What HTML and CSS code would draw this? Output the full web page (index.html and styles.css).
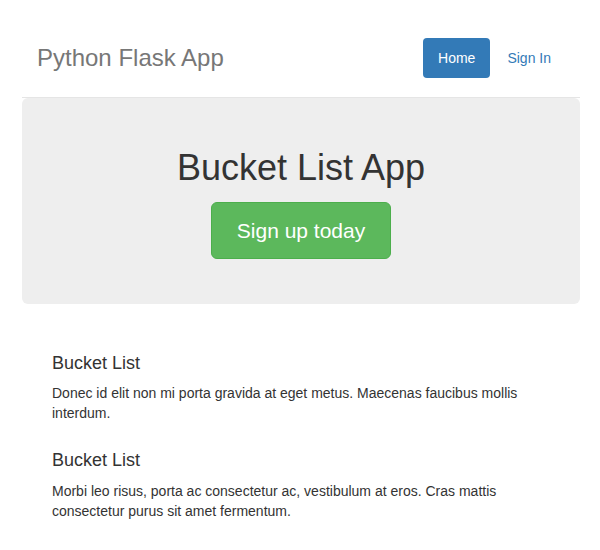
FILE: index.html
```html
<!DOCTYPE html>
<html lang="en">
<head>
<meta charset="utf-8">
<title>Python Flask Bucket List App</title>
<link rel="stylesheet" href="styles.css">
</head>
<body>
<div class="container">
  <div class="header">
    <h3 class="brand">Python Flask App</h3>
    <nav class="nav">
      <a class="pill active" href="#">Home</a>
      <a class="pill" href="#">Sign In</a>
    </nav>
  </div>

  <div class="jumbotron">
    <h1 class="jumbo-title">Bucket List App</h1>
    <p class="jumbo-lead"><a class="btn-signup" href="#" role="button">Sign up today</a></p>
  </div>

  <div class="marketing">
    <h4 class="m-title">Bucket List</h4>
    <p class="m-text">Donec id elit non mi porta gravida at eget metus. Maecenas faucibus mollis interdum.</p>
    <h4 class="m-title">Bucket List</h4>
    <p class="m-text">Morbi leo risus, porta ac consectetur ac, vestibulum at eros. Cras mattis consectetur purus sit amet fermentum.</p>
  </div>
</div>
</body>
</html>
```

FILE: styles.css
```css
* {
  box-sizing: border-box;
}

html, body {
  margin: 0;
  padding: 0;
  background: #fff;
}

body {
  font-family: "Liberation Sans", Arial, Helvetica, sans-serif;
  font-size: 14px;
  line-height: 20px;
  color: #333;
}

.container {
  padding: 18px 20px 0 22px;
}

.header {
  display: flex;
  justify-content: space-between;
  align-items: center;
  padding: 20px 14px 19px 15px;
  border-bottom: 1px solid #e5e5e5;
}

.brand {
  margin: 0;
  font-size: 24px;
  line-height: 40px;
  font-weight: normal;
  color: #777;
}

.nav {
  display: flex;
  gap: 2px;
}

.pill {
  display: block;
  padding: 10px 15px;
  line-height: 20px;
  font-size: 14px;
  color: #337ab7;
  text-decoration: none;
  border-radius: 4px;
}

.pill.active {
  color: #fff;
  background: #337ab7;
}

.jumbotron {
  background: #eee;
  border-radius: 6px;
  padding: 30px 15px;
  text-align: center;
  display: flow-root;
}

.jumbo-title {
  margin: 20px 0 10px;
  font-size: 36px;
  line-height: 39.6px;
  font-weight: normal;
  color: #333;
}

.jumbo-lead {
  margin: 0 0 15px;
  font-size: 21px;
  line-height: 30px;
}

.btn-signup {
  display: inline-block;
  vertical-align: top;
  margin-top: 4px;
  padding: 14px 25px;
  font-size: 21px;
  line-height: 27px;
  color: #fff;
  background: #5cb85c;
  border: 1px solid #4cae4c;
  border-radius: 6px;
  text-decoration: none;
}

.marketing {
  display: flow-root;
  margin: 40px 0;
  padding: 0 30px;
}

.m-title {
  margin: 10px 0 10px;
  font-size: 18px;
  line-height: 19.8px;
  font-weight: normal;
  color: #333;
}

.m-text {
  margin: 0 0 10px;
}

.m-text + .m-title {
  margin-top: 28px;
}
```
